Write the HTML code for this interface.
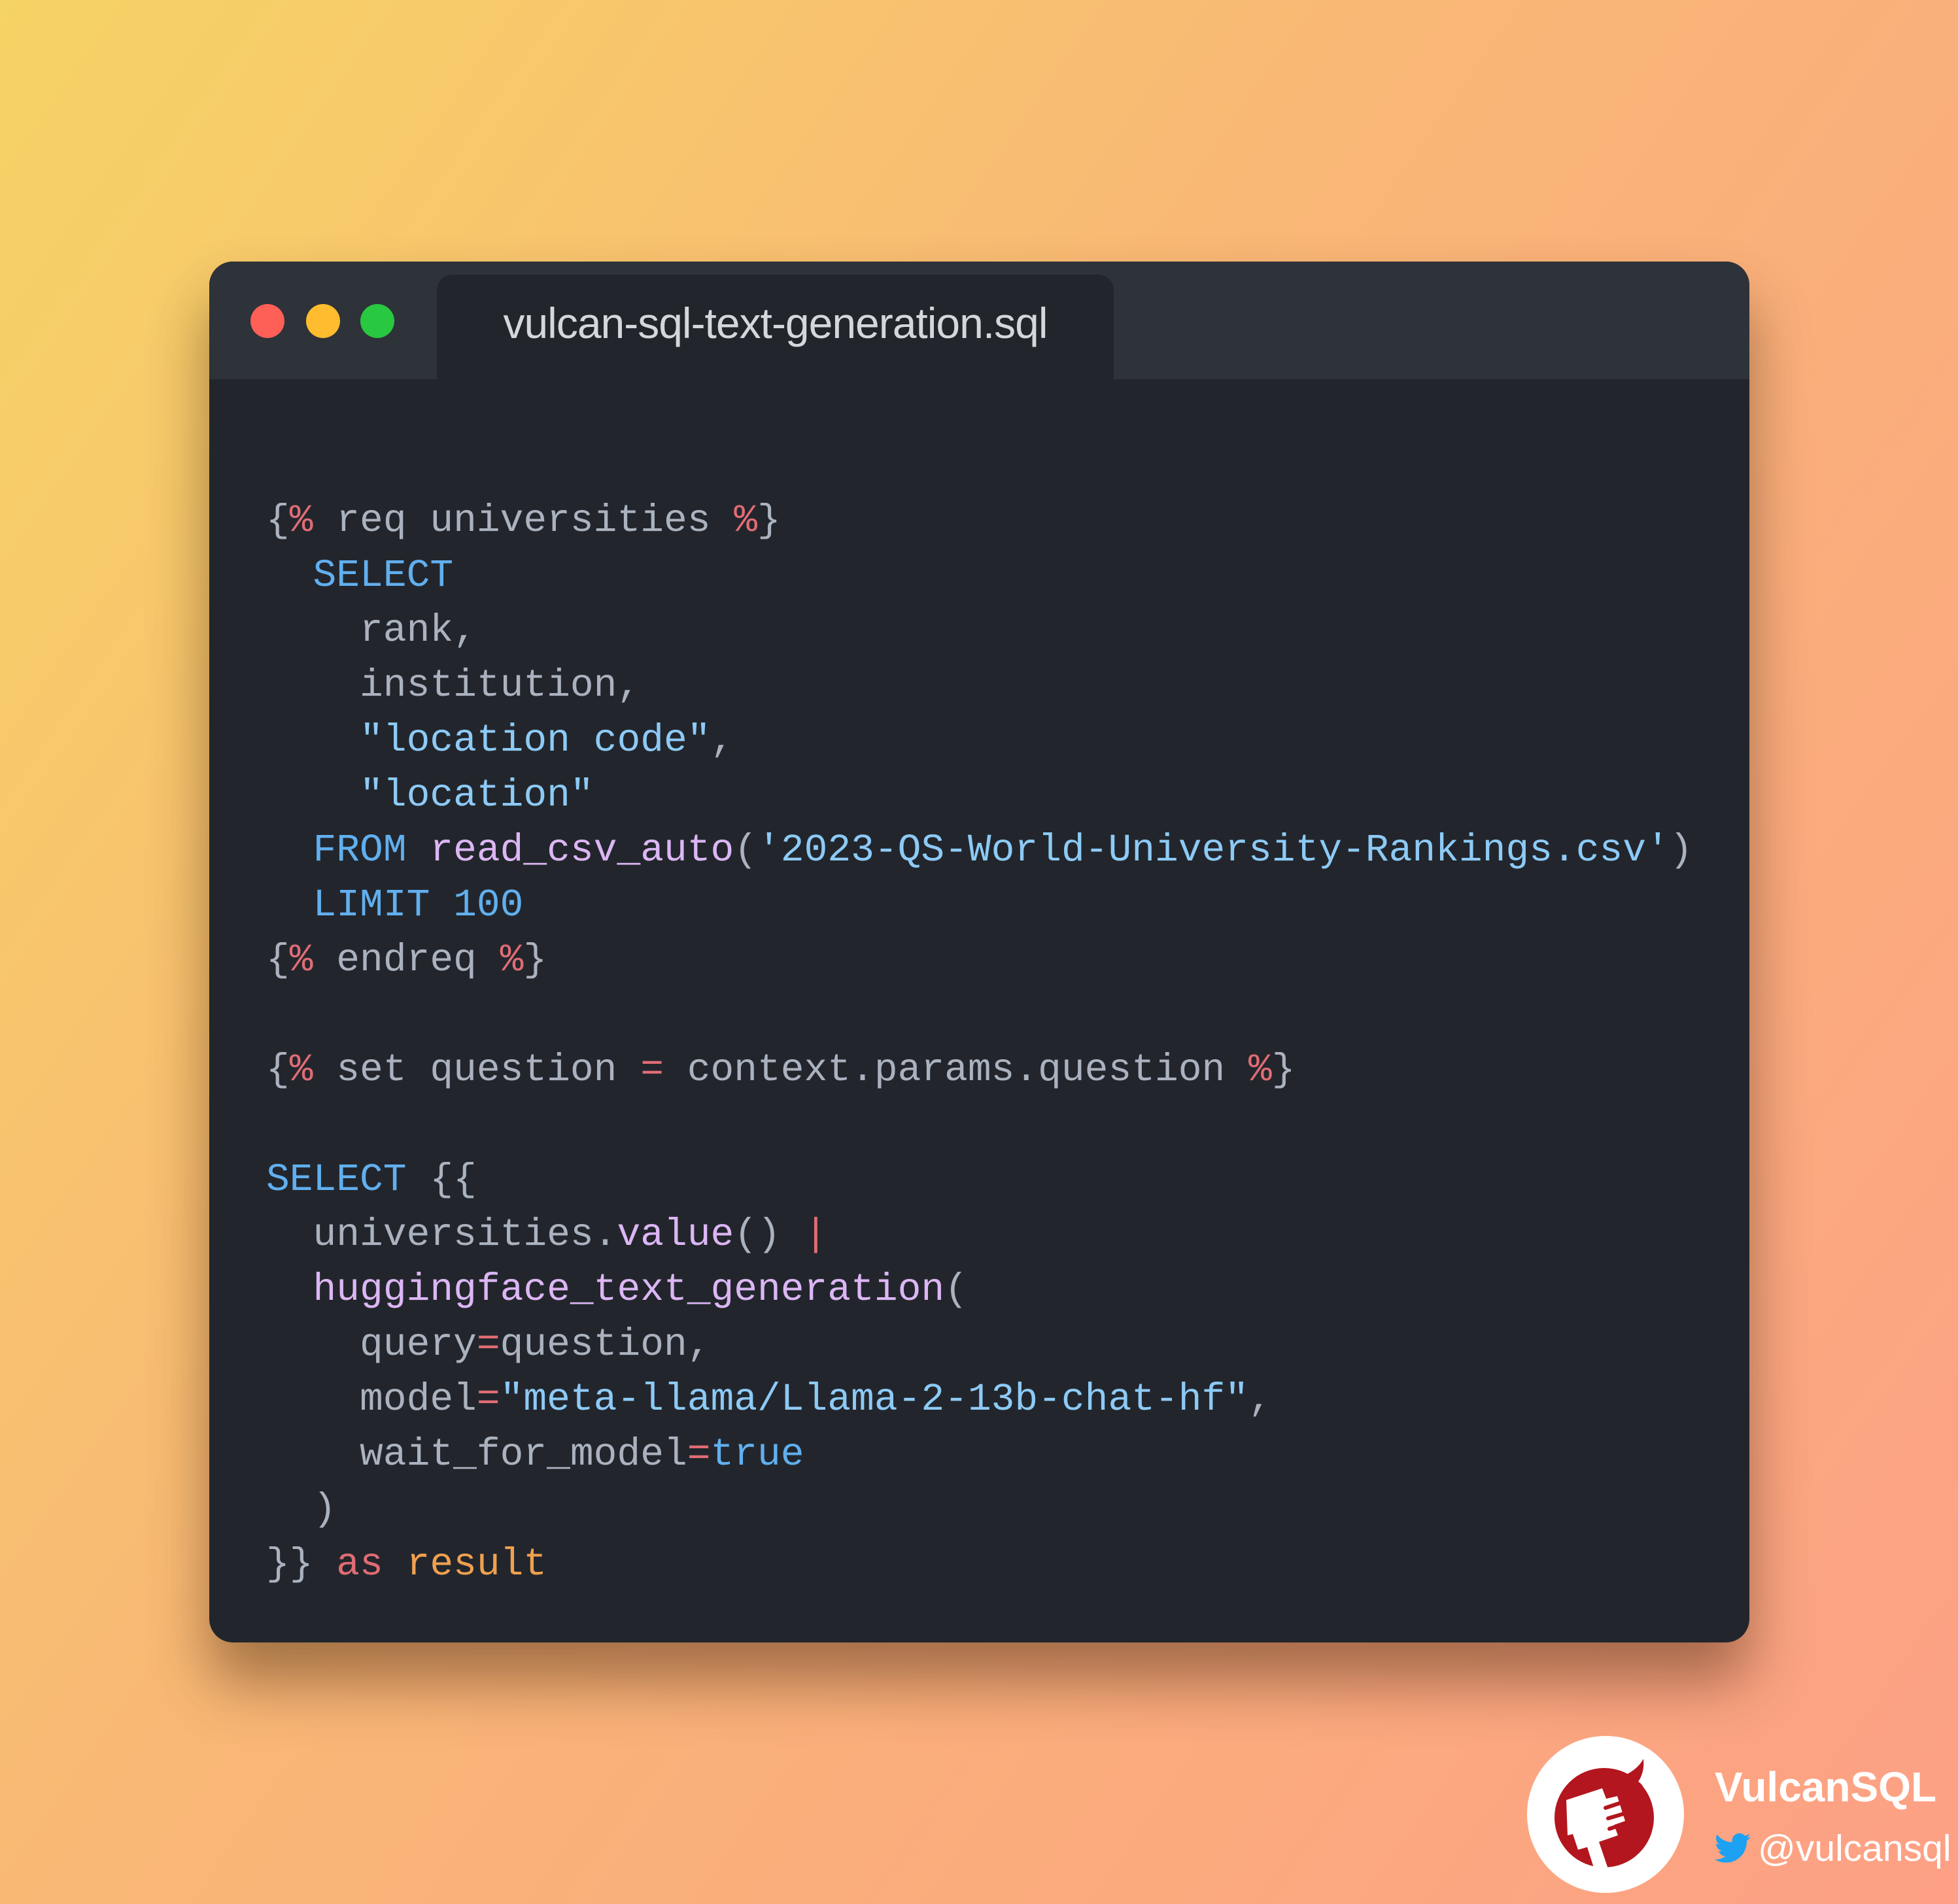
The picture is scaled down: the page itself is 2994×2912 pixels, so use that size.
<!DOCTYPE html>
<html><head><meta charset="utf-8"><style>
html,body{margin:0;padding:0}
body{width:2994px;height:2912px;position:relative;overflow:hidden;
background:linear-gradient(125deg,#f6d365 0%,#f9b676 45%,#fda085 100%);font-family:"Liberation Sans",sans-serif}
.win{position:absolute;left:320px;top:400px;width:2355px;height:2112px;background:#22262c;border-radius:36px;
box-shadow:0 60px 90px rgba(60,30,10,.45);overflow:hidden}
.bar{position:absolute;left:0;top:0;width:100%;height:180px;background:#2e3239}
.tab{position:absolute;left:348px;top:20px;width:1035px;height:180px;background:#22262c;border-radius:24px 24px 0 0}
.tab span{position:absolute;left:0;width:100%;top:36px;text-align:center;color:#d4d7dc;font-size:66px;letter-spacing:-1px}
.dot{position:absolute;top:65px;width:52px;height:52px;border-radius:50%}
pre{position:absolute;left:87px;top:354px;margin:0;font-family:"Liberation Mono",monospace;font-size:59.6px;line-height:84px;color:#abb2bf}
.r{color:#e06c75}.b{color:#61afef}.s{color:#8dcaf6}.p{color:#dcb6f4}.o{color:#f0a050}
.logo{position:absolute;left:2335px;top:2655px;width:240px;height:240px;border-radius:50%;background:#fff}
.t1{position:absolute;left:2622px;top:2696px;font-size:64px;font-weight:bold;color:#fff}
.t2{position:absolute;left:2688px;top:2794px;font-size:57px;color:#fff}
</style></head><body>
<div class="win">
<div class="bar"></div>
<div class="tab"><span>vulcan-sql-text-generation.sql</span></div>
<div class="dot" style="left:63px;background:#fe5f57"></div>
<div class="dot" style="left:148px;background:#febc2e"></div>
<div class="dot" style="left:231px;background:#28c840"></div>
<pre>{<span class="r">%</span> req universities <span class="r">%</span>}
  <span class="b">SELECT</span>
    rank,
    institution,
    <span class="s">"location code"</span>,
    <span class="s">"location"</span>
  <span class="b">FROM</span> <span class="p">read_csv_auto</span>(<span class="s">'2023-QS-World-University-Rankings.csv'</span>)
  <span class="b">LIMIT 100</span>
{<span class="r">%</span> endreq <span class="r">%</span>}

{<span class="r">%</span> set question <span class="r">=</span> context.params.question <span class="r">%</span>}

<span class="b">SELECT</span> {{
  universities.<span class="p">value</span>() <span class="r">|</span>
  <span class="p">huggingface_text_generation</span>(
    query<span class="r">=</span>question,
    model<span class="r">=</span><span class="s">"meta-llama/Llama-2-13b-chat-hf"</span>,
    wait_for_model<span class="r">=</span><span class="b">true</span>
  )
}} <span class="r">as</span> <span class="o">result</span></pre>
</div>
<div class="logo">
<svg width="240" height="240" viewBox="0 0 240 240">
<circle cx="118" cy="125" r="76" fill="#b3161e"/>
<path d="M150 60 q20 -10 28 -25 q2 20 -8 35 q10 5 12 25 L150 80 Z" fill="#b3161e"/>
<path d="M60 98 L115 80 L121 96 L138 92 L150 130 L133 136 L139 152 L110 162 L128 215 L108 220 L92 170 L78 174 L70 150 L62 152 Z" fill="#fff"/>
<g stroke="#b3161e" stroke-width="6" stroke-linecap="round"><line x1="120" y1="110" x2="150" y2="100"/><line x1="124" y1="126" x2="158" y2="116"/><line x1="126" y1="142" x2="150" y2="134"/></g>
</svg></div>
<div class="t1">VulcanSQL</div>
<svg style="position:absolute;left:2622px;top:2803px" width="56" height="48" viewBox="0 0 24 20"><path d="M23.6 2.4c-.9.4-1.8.6-2.8.8 1-.6 1.8-1.6 2.1-2.7-.9.6-2 1-3.1 1.2C18.9.7 17.6.1 16.2.1c-2.7 0-4.8 2.2-4.8 4.8 0 .4 0 .8.1 1.1C7.4 5.8 3.9 3.9 1.5 1 1.1 1.7.9 2.5.9 3.4c0 1.7.9 3.2 2.2 4-.8 0-1.5-.2-2.2-.6v.1c0 2.3 1.7 4.3 3.9 4.7-.4.1-.8.2-1.3.2-.3 0-.6 0-.9-.1.6 1.9 2.4 3.3 4.5 3.4-1.7 1.3-3.7 2.1-6 2.1-.4 0-.8 0-1.2-.1 2.1 1.4 4.7 2.2 7.4 2.2 8.9 0 13.7-7.4 13.7-13.7v-.6c1-.7 1.8-1.5 2.4-2.5z" fill="#1da1f2"/></svg>
<div class="t2">@vulcansql</div>
</body></html>
